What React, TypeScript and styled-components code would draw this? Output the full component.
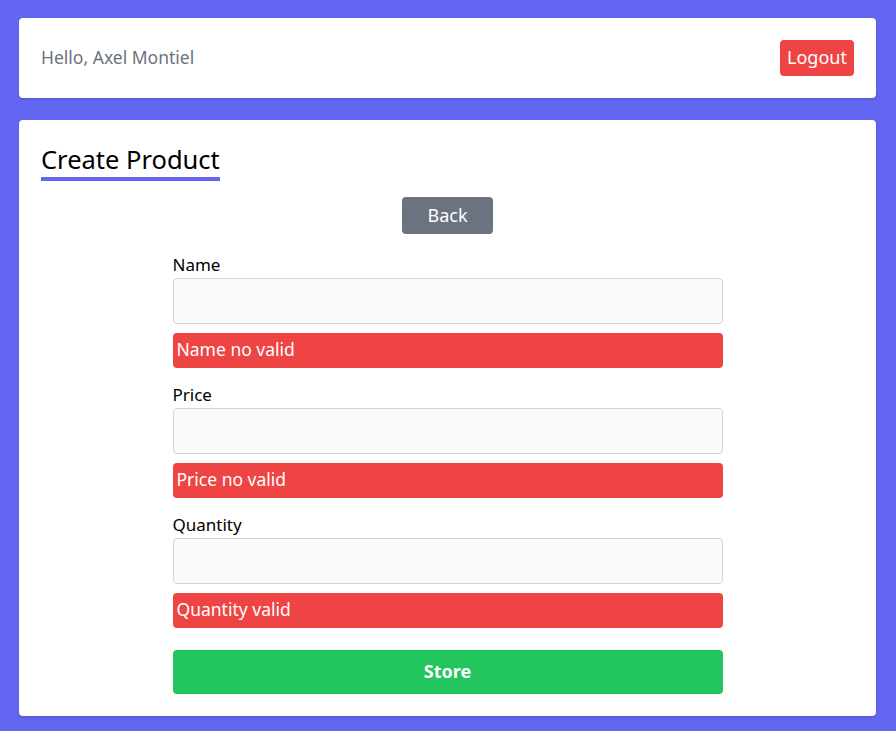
import React from "react";
import styled, { createGlobalStyle } from "styled-components";

const Global = createGlobalStyle`
  html, body { margin: 0; padding: 0; }
  body {
    background: #6366f1;
    font-family: "Noto Sans", "Open Sans", sans-serif;
    min-height: 731px;
  }
  * { box-sizing: border-box; }
`;

const Page = styled.div`
  display: flex;
  flex-direction: column;
  gap: 22px;
  padding: 18px 20px 15px 19px;
`;

const Card = styled.div`
  background: #ffffff;
  border-radius: 4px;
  box-shadow: 0 1px 3px rgba(0, 0, 0, 0.12), 0 1px 2px rgba(0, 0, 0, 0.08);
`;

const Header = styled(Card)`
  display: flex;
  align-items: center;
  justify-content: space-between;
  padding: 22px 22px;
`;

const Greeting = styled.span`
  color: #6b7280;
  font-size: 17.5px;
  line-height: 26px;
  padding-bottom: 2px;
`;

const Button = styled.button<{ $bg: string; $bold?: boolean }>`
  background: ${(p) => p.$bg};
  color: #ffffff;
  border: none;
  border-radius: 4px;
  font-family: inherit;
  font-size: 18px;
  line-height: 26px;
  font-weight: ${(p) => (p.$bold ? 700 : 400)};
  cursor: pointer;
`;

const LogoutButton = styled(Button)`
  height: 36px;
  padding: 0 0 2px;
  width: 74px;
`;

const Main = styled(Card)`
  display: flex;
  flex-direction: column;
  padding: 22px 22px 22px 22px;
`;

const Title = styled.h1`
  align-self: flex-start;
  margin: 0;
  font-size: 25.5px;
  font-weight: 400;
  line-height: 35px;
  color: #000;
  border-bottom: 4px solid #6366f1;
`;

const BackRow = styled.div`
  display: flex;
  justify-content: center;
  margin-top: 16px;
`;

const BackButton = styled(Button)`
  height: 37px;
  width: 91px;
  padding: 0 0 2px;
`;

const Form = styled.form`
  width: 550px;
  margin: 20px auto 0;
  display: flex;
  flex-direction: column;
`;

const Field = styled.div`
  display: flex;
  flex-direction: column;
  margin-bottom: 16px;
`;

const Label = styled.label`
  font-size: 17px;
  line-height: 22px;
  padding-bottom: 2px;
  color: #000;
`;

const Input = styled.input`
  height: 46px;
  background: #f9fafb;
  border: 1px solid #d1d5db;
  border-radius: 4px;
  font-family: inherit;
  font-size: 16px;
  padding: 0 12px;
  margin-bottom: 9px;
`;

const ErrorBox = styled.div`
  height: 35px;
  background: #ef4444;
  color: #ffffff;
  border-radius: 4px;
  font-size: 17.5px;
  line-height: 33px;
  padding: 0 4px;
`;

const StoreButton = styled(Button)`
  margin-top: 6px;
  height: 44px;
  width: 100%;
  padding: 0 0 2px;
`;

const fields = [
  { label: "Name", error: "Name no valid" },
  { label: "Price", error: "Price no valid" },
  { label: "Quantity", error: "Quantity valid" },
];

export default function App() {
  return (
    <>
      <Global />
      <Page>
        <Header>
          <Greeting>Hello, Axel Montiel</Greeting>
          <LogoutButton $bg="#ef4444">Logout</LogoutButton>
        </Header>
        <Main>
          <Title>Create Product</Title>
          <BackRow>
            <BackButton $bg="#6b7280">Back</BackButton>
          </BackRow>
          <Form onSubmit={(e) => e.preventDefault()}>
            {fields.map((f) => (
              <Field key={f.label}>
                <Label>{f.label}</Label>
                <Input type="text" />
                <ErrorBox>{f.error}</ErrorBox>
              </Field>
            ))}
            <StoreButton $bg="#22c55e" $bold type="submit">
              Store
            </StoreButton>
          </Form>
        </Main>
      </Page>
    </>
  );
}
